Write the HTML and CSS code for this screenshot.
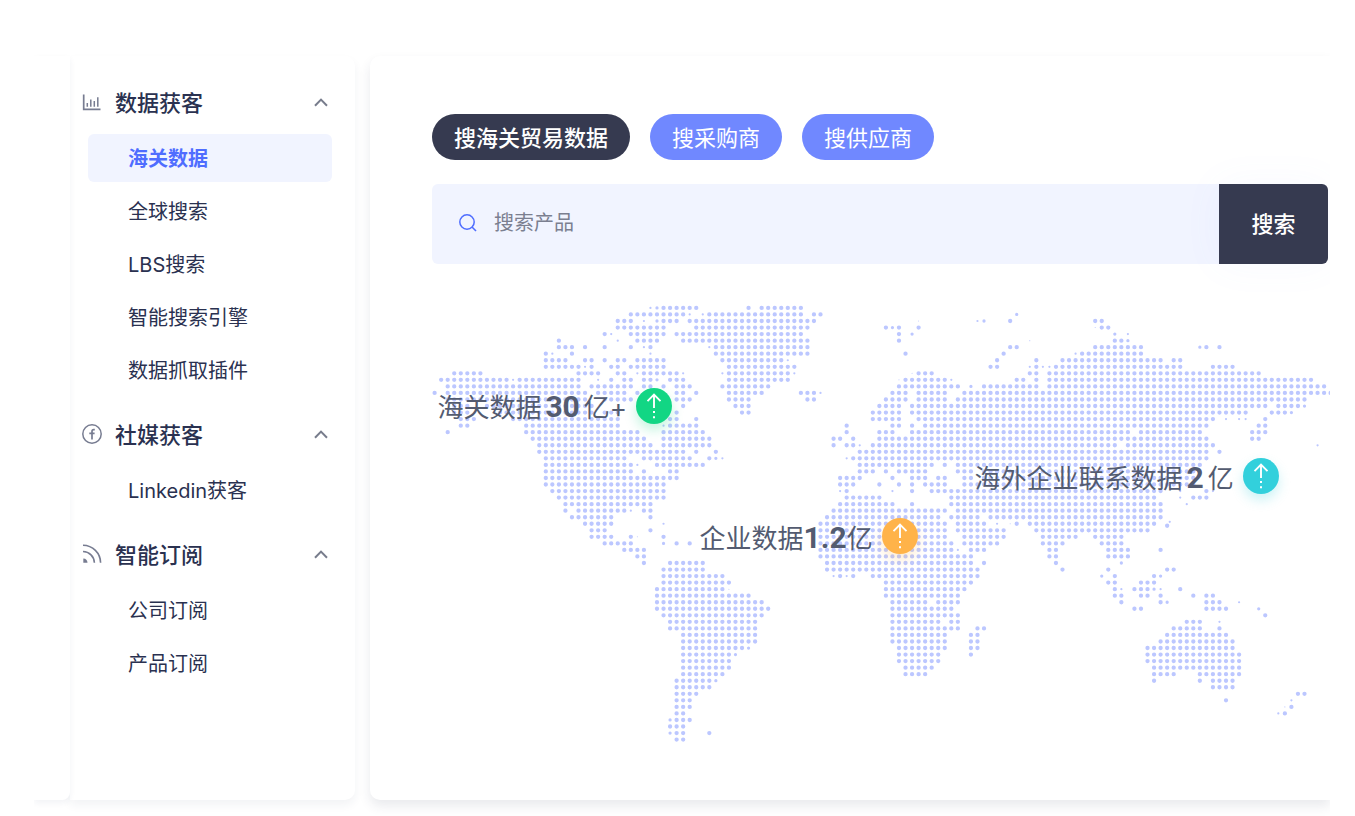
FILE: index.html
```
<!DOCTYPE html>
<html lang="zh-CN">
<head>
<meta charset="utf-8">
<title>海关数据</title>
<link rel="stylesheet" href="styles.css">
</head>
<body>
<svg class="defs" aria-hidden="true">
  <symbol id="chevron" viewBox="0 0 14 9"><path d="M1 7.800L7 1.600L13 7.800" fill="none" stroke="currentColor" stroke-width="2"/></symbol>
  <symbol id="arrow-up" viewBox="0 0 36 36">
    <path d="M18 20V7M11.500 13.200L18 6.700L24.500 13.200" fill="none" stroke="currentColor" stroke-width="1.900"/>
    <path d="M17 23h2v2h-2zM17 28.300h2v2h-2z" fill="currentColor"/>
  </symbol>
</svg>
<div class="app">
  <div class="rail"></div>
  <nav class="sidebar">
    <section class="group">
      <button class="group-head" type="button">
        <svg class="group-icon" viewBox="0 0 20 20"><path d="M1.700 2.500V17.300H18.500" fill="none" stroke="currentColor" stroke-width="1.700"/><path d="M5.300 14.800V11M8.800 14.800V7.500M12.300 14.800V9M15.800 14.800V5.200" fill="none" stroke="currentColor" stroke-width="1.500"/></svg>
        <span class="group-title">数据获客</span>
        <svg class="chevron"><use href="#chevron"/></svg>
      </button>
      <div class="items">
        <a class="item active" href="#customs">海关数据</a>
        <a class="item" href="#global">全球搜索</a>
        <a class="item" href="#lbs">LBS搜索</a>
        <a class="item" href="#engine">智能搜索引擎</a>
        <a class="item" href="#plugin">数据抓取插件</a>
      </div>
    </section>
    <section class="group">
      <button class="group-head" type="button">
        <svg class="group-icon" viewBox="0 0 20 20"><circle cx="10" cy="10" r="9.200" fill="none" stroke="currentColor" stroke-width="1.500"/><path d="M12.800 5.600H11.700Q10 5.600 10 7.400V15.600M7.300 9.300H12.600" fill="none" stroke="currentColor" stroke-width="1.700"/></svg>
        <span class="group-title">社媒获客</span>
        <svg class="chevron"><use href="#chevron"/></svg>
      </button>
      <div class="items">
        <a class="item" href="#linkedin">Linkedin获客</a>
      </div>
    </section>
    <section class="group">
      <button class="group-head" type="button">
        <svg class="group-icon" viewBox="0 0 20 20"><path d="M1 1.200A17.800 17.800 0 0 1 18.600 18.800M1 7.500A11.500 11.500 0 0 1 12.400 18.800" fill="none" stroke="currentColor" stroke-width="1.600"/><path d="M1.300 14.600A4.500 4.500 0 0 1 5.500 18.800H1.300Z" fill="currentColor"/></svg>
        <span class="group-title">智能订阅</span>
        <svg class="chevron"><use href="#chevron"/></svg>
      </button>
      <div class="items">
        <a class="item" href="#company">公司订阅</a>
        <a class="item" href="#product">产品订阅</a>
      </div>
    </section>
  </nav>
  <main class="main">
    <div class="tabs">
      <button class="tab selected" type="button">搜海关贸易数据</button>
      <button class="tab" type="button">搜采购商</button>
      <button class="tab" type="button">搜供应商</button>
    </div>
    <form class="search">
      <label class="search-field">
        <svg class="search-icon" viewBox="0 0 20 20"><circle cx="9" cy="9" r="7.200" fill="none" stroke="currentColor" stroke-width="1.500"/><path d="M14 14L18 18" stroke="currentColor" stroke-width="1.600"/></svg>
        <input class="search-input" type="text" placeholder="搜索产品" aria-label="搜索产品">
      </label>
      <button class="search-button" type="submit">搜索</button>
    </form>
    <div class="map">
      <svg class="map-dots" viewBox="-.4 -.6 137.300 67.200" aria-hidden="true">
        <path class="dots" d="
M35 0h5.100M48 0h.1M50 0h6.100
M30 1h8.100M42 1h14.100M58 1h1.100
M28 2h2.100M35 2h2.100M39 2h19.100M88 2h.1M101 2h1.100
M28 3h7.100M40 3h17.100M69 3h.1M71 3h.1M74 3h.1M102 3h1.100
M26 4h.1M30 4h5.100M37 4h19.100M71 4h.1
M19 5h.1M31 5h3.100M38 5h19.100M71 5h.1M104 5h1.100
M19 6h2.100M23 6h.1M26 6h.1M30 6h.1M33 6h.1M43 6h14.100M88 6h1.100M101 6h7.100M118 6h.1M120 6h.1
M17 7h.1M21 7h.1M43 7h14.100M72 7h.1M87 7h.1M99 7h9.100
M17 8h3.100M23 8h1.100M26 8h.1M28 8h1.100M31 8h4.100M44 8h9.100M86 8h.1M92 8h.1M96 8h15.100M113 8h1.100
M17 9h5.100M24 9h.1M27 9h1.100M30 9h5.100M45 9h10.100M85 9h1.100M92 9h.1M95 9h19.100M119 9h3.100
M3 10h4.100M22 10h3.100M28 10h1.100M32 10h5.100M45 10h9.100M74 10h2.100M91 10h1.100M94 10h32.100
M1 11h10.100M13 11h9.100M27 11h.1M29 11h1.100M32 11h1.100M36 11h2.100M45 11h9.100M72 11h6.100M89 11h1.100M92 11h.1M94 11h40.100
M2 12h20.100M24 12h6.100M32 12h1.100M35 12h.1M37 12h2.100M44 12h7.100M71 12h9.100M84 12h8.100M94 12h42.100
M0 13h.1M2 13h21.100M25 13h4.100M31 13h.1M37 13h1.100M40 13h.1M45 13h5.100M56 13h2.100M70 13h2.100M74 13h4.100M81 13h56.100
M2 14h21.100M26 14h4.100M37 14h2.100M45 14h3.100M57 14h1.100M69 14h3.100M74 14h4.100M80 14h53.100
M3 15h2.100M8 15h16.100M38 15h.1M46 15h2.100M68 15h3.100M73 15h54.100M129 15h3.100
M3 16h2.100M10 16h14.100M26 16h2.100M37 16h.1M47 16h1.100M67 16h4.100M73 16h51.100M128 16h2.100
M4 17h2.100M12 17h16.100M36 17h1.100M40 17h.1M67 17h4.100M74 17h45.100M127 17h.1
M4 18h1.100M14 18h14.100M36 18h4.100M63 18h.1M70 18h1.100M73 18h.1M75 18h43.100M126 18h1.100
M2 19h.1M14 19h17.100M35 19h6.100M63 19h.1M68 19h2.100M73 19h33.100M108 19h9.100M125 19h2.100
M15 20h17.100M35 20h7.100M61 20h1.100M64 20h.1M68 20h50.100M125 20h1.100
M16 21h17.100M35 21h7.100M61 21h.1M63 21h1.100M67 21h37.100M106 21h13.100
M16 22h22.100M40 22h.1M43 22h.1M65 22h53.100M120 22h.1
M17 23h12.100M32 23h7.100M42 23h.1M64 23h54.100
M17 24h13.100M34 24h7.100M65 24h11.100M78 24h.1M80 24h37.100
M17 25h13.100M32 25h.1M36 25h1.100M65 25h2.100M69 25h.1M71 25h4.100M80 25h2.100M84 25h33.100
M17 26h20.100M62 26h3.100M70 26h.1M73 26h2.100M77 26h1.100M81 26h1.100M84 26h32.100
M17 27h18.100M62 27h2.100M68 27h.1M71 27h.1M73 27h.1M75 27h3.100M81 27h35.100
M18 28h17.100M63 28h.1M73 28h.1M76 28h35.100M118 28h.1
M19 29h16.100M63 29h5.100M79 29h31.100M116 29h2.100
M20 30h13.100M62 30h8.100M73 30h.1M79 30h32.100
M20 31h.1M22 31h7.100M32 31h1.100M61 31h17.100M80 31h31.100
M21 32h6.100M33 32h.1M60 32h17.100M79 32h4.100M85 32h26.100
M23 33h4.100M59 33h19.100M80 33h4.100M89 33h.1M91 33h19.100M112 33.300h.1
M24 34h2.100M33 34h.1M59 34h19.100M80 34h7.100M92 34h17.100
M24 35h3.100M30 35h.1M35 35h.1M59 35h19.100M81 35h6.100M93 35h5.100M101 35h4.100
M26 36h4.100M37 36h.1M39 36h.1M59 36h20.100M81 36h5.100M93 36h3.100M102 36h3.100
M29 37h3.100M59 37h20.100M82 37h2.100M94 37h1.100M103 37h3.100M111 37h.1
M31 38h1.100M59 38h23.100M94 38h1.100M103 38h3.100
M32 39h.1M36 39h5.100M60 39h22.100M84 39h.1M95 39h.1
M35 40h6.100M60 40h23.100M96 40h.1M103 40h.1M112 40h1.100
M35 41h9.100M62 41h.1M64 41h.1M67 41h16.100M104 41h.1M110 41h.1
M35 42h10.100M69 42h13.100M103 42h1.100M108 42h2.100
M34 43h10.100M69 43h12.100M104 43h.1M107 43h2.100M114 43h.1
M34 44h14.100M69 44h11.100M104 44h1.100M108 44h1.100M111 44h.1M116 44h.1M118 44h1.100
M34 45h16.100M70 45h5.100M77 45h3.100M105 45h.1M111 45h.1M118 45h2.100
M34 46h17.100M70 46h9.100M107 46h1.100M118 46h3.100
M35 47h15.100M70 47h10.100M127 47h.1
M36 48h13.100M70 48h7.100M79 48h1.100M115 48h2.100
M36 49h13.100M70 49h10.100M83 49h1.100M113 49h4.100M120 49h.1
M38 50h11.100M70 50h8.100M82 50h1.100M112 50h9.100
M38 51h11.100M70 51h8.100M82 51h1.100M111 51h11.100
M38 52h9.100M71 52h7.100M82 52h1.100M109 52h13.100
M38 53h7.100M71 53h6.100M82 53h.1M109 53h14.100
M38 54h7.100M71 54h6.100M109 54h14.100
M38 55h7.100M72 55h4.100M110 55h13.100
M38 56h6.100M72 56h3.100M110 56h3.100M117 56h6.100
M37 57h5.100M110 57h.1M117 57h.1M119 57h3.100
M37 58h5.100M119 58h3.100
M37 59h3.100M132 59h1.100
M37 60h2.100M121 60h.1
M37 61h2.100M131 61h.1
M37 62h1.100M130 62h.1
M37 63h2.100M36 64h2.100M37 65h1.100M42 65h.1M37 66h1.100"/>
        <path class="dots medium" d="M34 0h.1M89 1h.1M34 2h.1M84 2h.1M70 3h.1M73 4h.1M104 4h.1M106 5h.1M117 6h.1M34 11h.1M82 12h.1M133 15h.1M131 16h.1M43 23h.1M35 36h.1M102 41h.1M111 41h.1M110 43h.1M112 45h.1M126 46h.1M48 52h.1M46 53h.1M43 57h.1M36 63h.1M36 65h.1M105 39h.1"/>
        <path class="dots small" d="M33 0h.1M39 1h.1M41 1h.1M32 2h.1M83 2h.1M106 4h.1M27 4h.1M28 5h.1M32 6h.1M42 6h.1M18 7h.1M33 7h.1M98 7h.1M54 8h.1M91 9h.1M93 9h1.100M23 9h.1M31 10h.1M38 10h.1M44 10h.1M55 10h.1M12 11h.1M25 11h.1M79 11h.1M59 13h.1M121 17h.1M123 17h1.100M35 18h.1M65 21h.1M135 21h.1M44 23h.1M63 23h.1M31 24h.1M62 28h.1M70 28h.1M114 28h.1M119 28h.1M114 29h.1M115 30h.1M30 31h.1M112.400 32.700h.1M35 33h.1M86 33h.1M80 37h.1M61 41h.1M63 41h.1M105 43h.1M111 43h.1M123 45h.1M120 48h.1M131 60h.1M129 62h.1"/>
        <path class="dots tiny" d="M74 2h.1M101 3h.1M91 5h.1M71 11h.1M73 10h.1M88 33h.1M31 35h.1M45 43h.1M130 61h.1"/>
      </svg>
      <div class="stat stat-customs"><span>海关数据</span><strong class="spaced">30</strong><span>亿+</span><svg class="badge green"><use href="#arrow-up"/></svg></div>
      <div class="stat stat-overseas"><span>海外企业联系数据</span><strong class="spaced">2</strong><span>亿</span><svg class="badge cyan"><use href="#arrow-up"/></svg></div>
      <div class="stat stat-company"><span>企业数据</span><strong>1.2</strong><span>亿</span><svg class="badge orange"><use href="#arrow-up"/></svg></div>
    </div>
  </main>
</div>
</body>
</html>
```
FILE: styles.css
```
* { box-sizing: border-box; }

body {
  margin: 0;
  padding: 56px 25px 16px 34px;
  min-height: 100vh;
  display: flex;
  background: #fff;
  color: #2a3150;
  font-family: Inter, "Noto Sans CJK SC", sans-serif;
}

button, input { font: inherit; border: 0; padding: 0; }
button { cursor: pointer; }
a { color: inherit; text-decoration: none; }
svg { display: block; flex: none; }
.defs { position: absolute; width: 0; height: 0; }

.app {
  flex: 1;
  display: flex;
  clip-path: inset(-16px 0);
}

.rail {
  width: 36px;
  border-radius: 0 0 8px 0;
  background: #fff;
  box-shadow: 0 3px 6px rgba(42, 49, 100, .06);
  position: relative;
  z-index: 2;
}

.sidebar {
  width: 285px;
  padding: 24px 23px 24px 12px;
  display: flex;
  flex-direction: column;
  gap: 18px;
  border-radius: 0 10px 10px 0;
  background: #fff;
  box-shadow: 0 5px 10px rgba(42, 49, 80, .06);
  position: relative;
  z-index: 1;
}

.group { display: flex; flex-direction: column; gap: 10px; }

.group-head {
  height: 44px;
  display: flex;
  align-items: center;
  background: none;
  color: #2a3150;
  font-size: 22px;
  font-weight: 500;
  text-align: left;
}

.group-icon { width: 20px; height: 20px; color: #777c91; }
.group-title { flex: 1; padding: 0 0 2px 13px; }
.chevron { width: 14px; height: 9px; margin-right: 4px; color: #777c8c; }

.items { display: flex; flex-direction: column; gap: 5px; padding-left: 6px; }

.item {
  height: 48px;
  padding-left: 40px;
  border-radius: 6px;
  font-size: 20px;
  line-height: 50px;
}

.item.active { background: #f1f4ff; color: #4f6dff; font-weight: 600; }

.main {
  flex: 1;
  min-width: 0;
  margin-left: 15px;
  padding: 58px 0 56px 62px;
  border-radius: 10px 0 0 10px;
  background: #fff;
  box-shadow: 0 6px 12px rgba(42, 49, 80, .1);
}

.tabs { display: flex; gap: 20px; }

.tab {
  height: 46px;
  padding: 0 22px 2px;
  border-radius: 23px;
  background: #7088ff;
  color: #fff;
  font-size: 22px;
}

.tab.selected { background: #363a50; font-weight: 500; }

.search {
  display: flex;
  height: 80px;
  margin: 24px 2px 0 0;
  border-radius: 6px;
}

.search-field {
  flex: 1;
  display: flex;
  align-items: center;
  gap: 16px;
  padding: 0 0 2px 26px;
  border-radius: 6px 0 0 6px;
  background: #f1f4ff;
}

.search-icon { width: 20px; height: 20px; color: #4f6dff; }

.search-input {
  flex: 1;
  min-width: 0;
  outline: 0;
  background: none;
  color: #2a3150;
  font-size: 20px;
}

.search-input::placeholder { color: #7b7f90; opacity: 1; }

.search-button {
  width: 109px;
  padding-bottom: 4px;
  border-radius: 0 6px 6px 0;
  background: #363a50;
  box-shadow: 0 0 40px rgba(112, 136, 255, .05);
  color: #fff;
  font-size: 22px;
  font-weight: 500;
}

.map { position: relative; margin-top: 40px; }
.map-dots { width: 100%; height: auto; }

.dots {
  fill: none;
  stroke: #bcc7ff;
  stroke-width: .66px;
  stroke-linecap: round;
  stroke-dasharray: 0 1;
}

.dots.medium { stroke-width: .5px; }
.dots.small { stroke-width: .34px; }
.dots.tiny { stroke-width: .16px; }

.stat {
  position: absolute;
  display: flex;
  align-items: center;
  height: 36px;
  color: #535b70;
  font-size: 26px;
  white-space: nowrap;
}

.stat strong {
  padding-top: 2px;
  font-family: Roboto, sans-serif;
  font-size: 30px;
  font-weight: 700;
}

.stat strong.spaced { padding: 2px 4px 0; }

.stat-customs { left: .6%; top: 19.1%; }
.stat-overseas { left: 60.4%; top: 35.1%; }
.stat-company { left: 29.8%; top: 48.8%; }

.badge {
  width: 36px;
  height: 36px;
  margin-left: 9px;
  border-radius: 50%;
  color: #fff;
}

.green { background: #12d684; box-shadow: 0 6px 12px rgba(18, 214, 132, .25); }
.cyan { background: #32d0dc; box-shadow: 0 6px 12px rgba(50, 208, 220, .25); }
.orange { background: #ffb349; box-shadow: 0 6px 12px rgba(255, 179, 73, .25); }
```
